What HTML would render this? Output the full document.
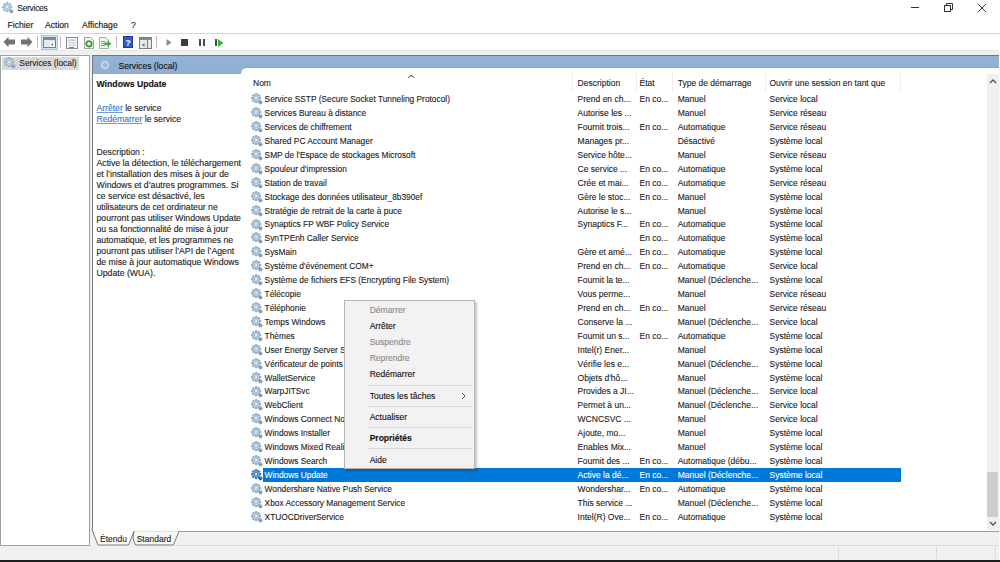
<!DOCTYPE html><html><head><meta charset="utf-8"><style>
*{box-sizing:border-box}
body{margin:0;width:1000px;height:562px;overflow:hidden;background:#f0f0f0;position:relative;font-family:'Liberation Sans',sans-serif;color:#000;-webkit-text-stroke:0.12px}
.a{position:absolute;white-space:nowrap}
.t{position:absolute;white-space:nowrap;font-size:8.5px;line-height:14px;color:#1a1a1a;-webkit-text-stroke:0.1px}
</style></head><body>
<svg width="0" height="0" style="position:absolute">
<defs>
<symbol id="gear" viewBox="0 0 14 14">
<path d="M12.69 10.39L13.51 10.33L13.51 11.67L12.69 11.61L12.37 12.16L12.84 12.84L11.67 13.51L11.32 12.77L10.68 12.77L10.33 13.51L9.16 12.84L9.63 12.16L9.31 11.61L8.49 11.67L8.49 10.33L9.31 10.39L9.63 9.84L9.16 9.16L10.33 8.49L10.68 9.23L11.32 9.23L11.67 8.49L12.84 9.16L12.37 9.84Z" fill="#8497ad"/>
<path d="M10.18 4.98L11.51 5.02L11.51 6.98L10.18 7.02L9.68 8.23L10.59 9.20L9.20 10.59L8.23 9.68L7.02 10.18L6.98 11.51L5.02 11.51L4.98 10.18L3.77 9.68L2.80 10.59L1.41 9.20L2.32 8.23L1.82 7.02L0.49 6.98L0.49 5.02L1.82 4.98L2.32 3.77L1.41 2.80L2.80 1.41L3.77 2.32L4.98 1.82L5.02 0.49L6.98 0.49L7.02 1.82L8.23 2.32L9.20 1.41L10.59 2.80L9.68 3.77Z" fill="#98afc6" stroke="#7b93ab" stroke-width="0.6"/>
<circle cx="6" cy="6" r="3.3" fill="#bcd8ef"/>
<circle cx="6" cy="6" r="2.0" fill="#7a9cbc"/>
<circle cx="6" cy="6" r="1.35" fill="#f6fbff"/>
</symbol>
<symbol id="gearsel" viewBox="0 0 14 14">
<path d="M12.69 10.39L13.51 10.33L13.51 11.67L12.69 11.61L12.37 12.16L12.84 12.84L11.67 13.51L11.32 12.77L10.68 12.77L10.33 13.51L9.16 12.84L9.63 12.16L9.31 11.61L8.49 11.67L8.49 10.33L9.31 10.39L9.63 9.84L9.16 9.16L10.33 8.49L10.68 9.23L11.32 9.23L11.67 8.49L12.84 9.16L12.37 9.84Z" fill="#2c5f96"/>
<path d="M10.18 4.98L11.51 5.02L11.51 6.98L10.18 7.02L9.68 8.23L10.59 9.20L9.20 10.59L8.23 9.68L7.02 10.18L6.98 11.51L5.02 11.51L4.98 10.18L3.77 9.68L2.80 10.59L1.41 9.20L2.32 8.23L1.82 7.02L0.49 6.98L0.49 5.02L1.82 4.98L2.32 3.77L1.41 2.80L2.80 1.41L3.77 2.32L4.98 1.82L5.02 0.49L6.98 0.49L7.02 1.82L8.23 2.32L9.20 1.41L10.59 2.80L9.68 3.77Z" fill="#3d7fc2" stroke="#2a68a8" stroke-width="0.7"/>
<circle cx="6" cy="6" r="3.3" fill="#7fb6e6"/>
<circle cx="6" cy="6" r="2.1" fill="#2a66a6"/>
<circle cx="6" cy="6" r="1.3" fill="#f4f9ff"/>
</symbol>
<symbol id="gearlt" viewBox="0 0 14 14">
<path d="M12.69 10.39L13.51 10.33L13.51 11.67L12.69 11.61L12.37 12.16L12.84 12.84L11.67 13.51L11.32 12.77L10.68 12.77L10.33 13.51L9.16 12.84L9.63 12.16L9.31 11.61L8.49 11.67L8.49 10.33L9.31 10.39L9.63 9.84L9.16 9.16L10.33 8.49L10.68 9.23L11.32 9.23L11.67 8.49L12.84 9.16L12.37 9.84Z" fill="#8fa3b8"/>
<path d="M10.18 4.98L11.51 5.02L11.51 6.98L10.18 7.02L9.68 8.23L10.59 9.20L9.20 10.59L8.23 9.68L7.02 10.18L6.98 11.51L5.02 11.51L4.98 10.18L3.77 9.68L2.80 10.59L1.41 9.20L2.32 8.23L1.82 7.02L0.49 6.98L0.49 5.02L1.82 4.98L2.32 3.77L1.41 2.80L2.80 1.41L3.77 2.32L4.98 1.82L5.02 0.49L6.98 0.49L7.02 1.82L8.23 2.32L9.20 1.41L10.59 2.80L9.68 3.77Z" fill="#a3b8cc" stroke="#8aa0b6" stroke-width="0.6"/>
<circle cx="6" cy="6" r="3.3" fill="#c2dcf0"/>
<circle cx="6" cy="6" r="2.0" fill="#8eb0cc"/>
<circle cx="6" cy="6" r="1.3" fill="#eef6ff"/>
</symbol>
</defs></svg>

<div class="a" style="left:0;top:0;width:1000px;height:50px;background:#fff"></div>
<div class="a" style="left:0;top:33px;width:1000px;height:1px;background:#d5d5d5"></div>
<div class="a" style="left:0;top:50px;width:1000px;height:1px;background:#e6e6e6"></div>
<svg class="a" style="left:2px;top:2px" width="12" height="12"><use href="#gearlt"/></svg>
<div class="a" style="left:17.3px;top:2.3px;font-size:8.6px;line-height:12px;color:#222;letter-spacing:-0.35px;-webkit-text-stroke:0.1px">Services</div>
<div class="a" style="left:911px;top:7px;width:8px;height:1px;background:#333"></div>
<svg class="a" style="left:943px;top:2px" width="11" height="11"><rect x="1.5" y="3.5" width="6" height="6" fill="none" stroke="#333" stroke-width="1"/><path d="M3.5 3.5V1.5H9.5V7.5H7.5" fill="none" stroke="#333" stroke-width="1"/></svg>
<svg class="a" style="left:977px;top:3px" width="10" height="10"><path d="M1 1L9 9M9 1L1 9" stroke="#333" stroke-width="1"/></svg>
<div class="a" style="left:7.5px;top:19px;font-size:8.6px;line-height:12px;color:#111">Fichier</div>
<div class="a" style="left:45px;top:19px;font-size:8.6px;line-height:12px;color:#111">Action</div>
<div class="a" style="left:82px;top:19px;font-size:8.6px;line-height:12px;color:#111">Affichage</div>
<div class="a" style="left:131px;top:19px;font-size:8.6px;line-height:12px;color:#111">?</div>
<div class="a" style="left:41px;top:34.5px;width:16.5px;height:15px;background:#cce4f7;border:1px solid #99c9ef"></div>

<svg class="a" style="left:3px;top:36px" width="13" height="12"><path d="M0.5 6L5.5 0.8V3.5H12V8.5H5.5V11.2Z" fill="#747474"/></svg>
<svg class="a" style="left:20px;top:36px" width="13" height="12"><path d="M12.5 6L7.5 0.8V3.5H1V8.5H7.5V11.2Z" fill="#747474"/></svg>
<div class="a" style="left:37px;top:36px;width:1px;height:12px;background:#bdbdbd"></div>
<svg class="a" style="left:43px;top:37px" width="13" height="11"><rect x="0.5" y="0.5" width="12" height="10" fill="#e8e8f0" stroke="#7a7a90"/><rect x="1" y="1" width="11" height="2" fill="#8888a0"/><rect x="7" y="5" width="4.5" height="5" fill="#fff"/><path d="M8 7.5L10 6V9Z" fill="#2ea02e"/></svg>
<div class="a" style="left:59.5px;top:36px;width:1px;height:12px;background:#bdbdbd"></div>
<svg class="a" style="left:65.5px;top:36.5px" width="12" height="12"><rect x="0.5" y="0.5" width="11" height="11" fill="#f6f8fa" stroke="#8c8c8c"/><rect x="2" y="2.5" width="8" height="1.3" fill="#b9c6d6"/><rect x="2" y="5" width="8" height="1.3" fill="#c6d2e0"/><rect x="2" y="7.5" width="8" height="1.3" fill="#c6d2e0"/><rect x="3" y="10" width="5" height="1" fill="#4b86c8"/></svg>
<svg class="a" style="left:84px;top:36.5px" width="10" height="12"><path d="M0.5 0.5H6.5L9.5 3.5V11.5H0.5Z" fill="#f7f7f7" stroke="#a0a0a0"/><circle cx="5" cy="6.8" r="2.7" fill="none" stroke="#2fa22f" stroke-width="1.8"/><path d="M5 5.5V8" stroke="#fff" stroke-width="1"/></svg>
<svg class="a" style="left:99px;top:36.5px" width="13" height="12"><path d="M0.5 0.5H7L9.5 3V11.5H0.5Z" fill="#f6f5ec" stroke="#a8a8a0"/><path d="M2 4.5H6M2 6.5H6M2 8.5H6" stroke="#7a7a60" stroke-width="0.8"/><path d="M5.5 5.5H8.5V3.5L12.5 6.8L8.5 10V8H5.5Z" fill="#3cb43c"/></svg>
<div class="a" style="left:115.5px;top:36px;width:1px;height:12px;background:#bdbdbd"></div>
<svg class="a" style="left:123px;top:36px" width="10" height="12"><rect x="0" y="0" width="10" height="12" fill="#1f3f9e"/><rect x="1" y="1" width="8" height="10" fill="#3457c0"/><text x="5" y="9.5" font-family="Liberation Sans" font-size="9" font-weight="bold" fill="#fff" text-anchor="middle">?</text></svg>
<svg class="a" style="left:138.5px;top:37px" width="13" height="12"><rect x="0.5" y="0.5" width="12" height="11" fill="#e8e8f0" stroke="#7a7a90"/><rect x="1" y="1" width="11" height="2" fill="#8888a0"/><path d="M8.5 3V11.5" stroke="#7a7a90"/><path d="M3 8L5.5 6V10Z" fill="#2ea02e"/></svg>
<div class="a" style="left:155.5px;top:36px;width:1px;height:12px;background:#bdbdbd"></div>
<svg class="a" style="left:165.5px;top:39px" width="6" height="7"><path d="M0.5 0L5.5 3.5L0.5 7Z" fill="#8a8a8a"/></svg>
<div class="a" style="left:181px;top:39px;width:7px;height:7px;background:#3c3c3c"></div>
<div class="a" style="left:198.5px;top:39px;width:2px;height:7px;background:#4a4a4a"></div>
<div class="a" style="left:202.5px;top:39px;width:2px;height:7px;background:#4a4a4a"></div>
<div class="a" style="left:214.5px;top:39px;width:2px;height:7px;background:#4a4a4a"></div>
<svg class="a" style="left:217.5px;top:38.5px" width="6" height="8"><path d="M0 0L5.5 4L0 8Z" fill="#2eb82e"/></svg>

<div class="a" style="left:0;top:55px;width:90px;height:490.5px;background:#fff;border:1px solid #a0a0a0"></div>
<div class="a" style="left:2px;top:57px;width:77px;height:12.5px;background:#d9d9d9"></div>
<svg class="a" style="left:3.5px;top:57.3px" width="12" height="12"><use href="#gearlt"/></svg>
<div class="a" style="left:19.3px;top:56.7px;font-size:8.4px;line-height:12px;color:#222;-webkit-text-stroke:0.1px">Services (local)</div>
<div class="a" style="left:92px;top:55px;width:907px;height:475.5px;background:#fff;border-left:1px solid #7a7a7a;border-top:1px solid #6f7787"></div>
<div class="a" style="left:175px;top:544.5px;width:824px;height:1px;background:#dadada"></div>
<div class="a" style="left:93px;top:56px;width:906px;height:17.6px;background:linear-gradient(#93b4d6,#8fb1d4 50%,#96acd5)"></div>
<svg class="a" style="left:100px;top:59.7px" width="10" height="10"><circle cx="5" cy="5" r="3.3" fill="none" stroke="#c3d7ea" stroke-width="2"/><circle cx="5" cy="5" r="1.3" fill="#9fbddb"/></svg>
<div class="a" style="left:118.5px;top:59.6px;font-size:8.6px;line-height:12px;color:#111">Services (local)</div>
<div class="a" style="left:93px;top:73.6px;width:148px;height:458px;background:#fff"></div>
<div class="a" style="left:96.5px;top:78.8px;font-size:8.7px;line-height:11px;font-weight:bold;color:#111">Windows Update</div>
<div class="a" style="left:96.5px;top:102.5px;font-size:8.6px;line-height:11px;color:#222"><span style="color:#3478c6;text-decoration:underline;text-decoration-color:#6a9fd8">Arrêter</span> le service</div>
<div class="a" style="left:96.5px;top:113.5px;font-size:8.6px;line-height:11px;color:#222"><span style="color:#3478c6;text-decoration:underline;text-decoration-color:#6a9fd8">Redémarrer</span> le service</div>
<div class="a" style="left:96.5px;top:146.5px;font-size:8.7px;line-height:11px;color:#222">Description :<br>Active la détection, le téléchargement<br>et l’installation des mises à jour de<br>Windows et d’autres programmes. Si<br>ce service est désactivé, les<br>utilisateurs de cet ordinateur ne<br>pourront pas utiliser Windows Update<br>ou sa fonctionnalité de mise à jour<br>automatique, et les programmes ne<br>pourront pas utiliser l’API de l’Agent<br>de mise à jour automatique Windows<br>Update (WUA).</div>
<div class="a" style="left:241px;top:67px;width:758px;height:464.5px;background:#fff;border-top-left-radius:6px;border-top:1px solid #88a8b8"></div>
<div class="a" style="left:572px;top:72.5px;width:1px;height:19px;background:#ededed"></div>
<div class="a" style="left:635.5px;top:72.5px;width:1px;height:19px;background:#ededed"></div>
<div class="a" style="left:672px;top:72.5px;width:1px;height:19px;background:#ededed"></div>
<div class="a" style="left:764.6px;top:72.5px;width:1px;height:19px;background:#ededed"></div>
<div class="a" style="left:900px;top:72.5px;width:1px;height:19px;background:#ededed"></div>
<div class="t" style="left:253px;top:75.7px">Nom</div>
<div class="t" style="left:577.6px;top:75.7px">Description</div>
<div class="t" style="left:639.6px;top:75.7px">État</div>
<div class="t" style="left:677.7px;top:75.7px">Type de démarrage</div>
<div class="t" style="left:769.5px;top:75.7px">Ouvrir une session en tant que</div>
<svg class="a" style="left:407px;top:73px" width="8" height="6"><path d="M1.2 4.6L4.2 2.2L7.2 4.6" fill="none" stroke="#6a6a6a" stroke-width="1.1"/></svg>
<svg class="a" style="left:250.5px;top:93.30px" width="12" height="12"><use href="#gear"/></svg>
<div class="t" style="left:264.6px;top:92.20px;color:#1a1a1a;font-size:8.35px">Service SSTP (Secure Socket Tunneling Protocol)</div>
<div class="t" style="left:577.6px;top:92.20px;color:#1a1a1a">Prend en ch...</div>
<div class="t" style="left:639.6px;top:92.20px;color:#1a1a1a">En co...</div>
<div class="t" style="left:677.7px;top:92.20px;color:#1a1a1a">Manuel</div>
<div class="t" style="left:769.5px;top:92.20px;color:#1a1a1a">Service local</div>
<svg class="a" style="left:250.5px;top:107.22px" width="12" height="12"><use href="#gear"/></svg>
<div class="t" style="left:264.6px;top:106.11px;color:#1a1a1a;font-size:8.35px">Services Bureau à distance</div>
<div class="t" style="left:577.6px;top:106.11px;color:#1a1a1a">Autorise les ...</div>
<div class="t" style="left:677.7px;top:106.11px;color:#1a1a1a">Manuel</div>
<div class="t" style="left:769.5px;top:106.11px;color:#1a1a1a">Service réseau</div>
<svg class="a" style="left:250.5px;top:121.13px" width="12" height="12"><use href="#gear"/></svg>
<div class="t" style="left:264.6px;top:120.03px;color:#1a1a1a;font-size:8.35px">Services de chiffrement</div>
<div class="t" style="left:577.6px;top:120.03px;color:#1a1a1a">Fournit trois...</div>
<div class="t" style="left:639.6px;top:120.03px;color:#1a1a1a">En co...</div>
<div class="t" style="left:677.7px;top:120.03px;color:#1a1a1a">Automatique</div>
<div class="t" style="left:769.5px;top:120.03px;color:#1a1a1a">Service réseau</div>
<svg class="a" style="left:250.5px;top:135.05px" width="12" height="12"><use href="#gear"/></svg>
<div class="t" style="left:264.6px;top:133.95px;color:#1a1a1a;font-size:8.35px">Shared PC Account Manager</div>
<div class="t" style="left:577.6px;top:133.95px;color:#1a1a1a">Manages pr...</div>
<div class="t" style="left:677.7px;top:133.95px;color:#1a1a1a">Désactivé</div>
<div class="t" style="left:769.5px;top:133.95px;color:#1a1a1a">Système local</div>
<svg class="a" style="left:250.5px;top:148.96px" width="12" height="12"><use href="#gear"/></svg>
<div class="t" style="left:264.6px;top:147.86px;color:#1a1a1a;font-size:8.35px">SMP de l'Espace de stockages Microsoft</div>
<div class="t" style="left:577.6px;top:147.86px;color:#1a1a1a">Service hôte...</div>
<div class="t" style="left:677.7px;top:147.86px;color:#1a1a1a">Manuel</div>
<div class="t" style="left:769.5px;top:147.86px;color:#1a1a1a">Service réseau</div>
<svg class="a" style="left:250.5px;top:162.88px" width="12" height="12"><use href="#gear"/></svg>
<div class="t" style="left:264.6px;top:161.78px;color:#1a1a1a;font-size:8.35px">Spouleur d'impression</div>
<div class="t" style="left:577.6px;top:161.78px;color:#1a1a1a">Ce service ...</div>
<div class="t" style="left:639.6px;top:161.78px;color:#1a1a1a">En co...</div>
<div class="t" style="left:677.7px;top:161.78px;color:#1a1a1a">Automatique</div>
<div class="t" style="left:769.5px;top:161.78px;color:#1a1a1a">Système local</div>
<svg class="a" style="left:250.5px;top:176.79px" width="12" height="12"><use href="#gear"/></svg>
<div class="t" style="left:264.6px;top:175.69px;color:#1a1a1a;font-size:8.35px">Station de travail</div>
<div class="t" style="left:577.6px;top:175.69px;color:#1a1a1a">Crée et mai...</div>
<div class="t" style="left:639.6px;top:175.69px;color:#1a1a1a">En co...</div>
<div class="t" style="left:677.7px;top:175.69px;color:#1a1a1a">Automatique</div>
<div class="t" style="left:769.5px;top:175.69px;color:#1a1a1a">Service réseau</div>
<svg class="a" style="left:250.5px;top:190.71px" width="12" height="12"><use href="#gear"/></svg>
<div class="t" style="left:264.6px;top:189.61px;color:#1a1a1a;font-size:8.35px">Stockage des données utilisateur_8b390ef</div>
<div class="t" style="left:577.6px;top:189.61px;color:#1a1a1a">Gère le stoc...</div>
<div class="t" style="left:639.6px;top:189.61px;color:#1a1a1a">En co...</div>
<div class="t" style="left:677.7px;top:189.61px;color:#1a1a1a">Manuel</div>
<div class="t" style="left:769.5px;top:189.61px;color:#1a1a1a">Système local</div>
<svg class="a" style="left:250.5px;top:204.62px" width="12" height="12"><use href="#gear"/></svg>
<div class="t" style="left:264.6px;top:203.52px;color:#1a1a1a;font-size:8.35px">Stratégie de retrait de la carte à puce</div>
<div class="t" style="left:577.6px;top:203.52px;color:#1a1a1a">Autorise le s...</div>
<div class="t" style="left:677.7px;top:203.52px;color:#1a1a1a">Manuel</div>
<div class="t" style="left:769.5px;top:203.52px;color:#1a1a1a">Système local</div>
<svg class="a" style="left:250.5px;top:218.53px" width="12" height="12"><use href="#gear"/></svg>
<div class="t" style="left:264.6px;top:217.44px;color:#1a1a1a;font-size:8.35px">Synaptics FP WBF Policy Service</div>
<div class="t" style="left:577.6px;top:217.44px;color:#1a1a1a">Synaptics F...</div>
<div class="t" style="left:639.6px;top:217.44px;color:#1a1a1a">En co...</div>
<div class="t" style="left:677.7px;top:217.44px;color:#1a1a1a">Automatique</div>
<div class="t" style="left:769.5px;top:217.44px;color:#1a1a1a">Système local</div>
<svg class="a" style="left:250.5px;top:232.45px" width="12" height="12"><use href="#gear"/></svg>
<div class="t" style="left:264.6px;top:231.35px;color:#1a1a1a;font-size:8.35px">SynTPEnh Caller Service</div>
<div class="t" style="left:639.6px;top:231.35px;color:#1a1a1a">En co...</div>
<div class="t" style="left:677.7px;top:231.35px;color:#1a1a1a">Automatique</div>
<div class="t" style="left:769.5px;top:231.35px;color:#1a1a1a">Système local</div>
<svg class="a" style="left:250.5px;top:246.37px" width="12" height="12"><use href="#gear"/></svg>
<div class="t" style="left:264.6px;top:245.27px;color:#1a1a1a;font-size:8.35px">SysMain</div>
<div class="t" style="left:577.6px;top:245.27px;color:#1a1a1a">Gère et amé...</div>
<div class="t" style="left:639.6px;top:245.27px;color:#1a1a1a">En co...</div>
<div class="t" style="left:677.7px;top:245.27px;color:#1a1a1a">Automatique</div>
<div class="t" style="left:769.5px;top:245.27px;color:#1a1a1a">Système local</div>
<svg class="a" style="left:250.5px;top:260.28px" width="12" height="12"><use href="#gear"/></svg>
<div class="t" style="left:264.6px;top:259.18px;color:#1a1a1a;font-size:8.35px">Système d'événement COM+</div>
<div class="t" style="left:577.6px;top:259.18px;color:#1a1a1a">Prend en ch...</div>
<div class="t" style="left:639.6px;top:259.18px;color:#1a1a1a">En co...</div>
<div class="t" style="left:677.7px;top:259.18px;color:#1a1a1a">Automatique</div>
<div class="t" style="left:769.5px;top:259.18px;color:#1a1a1a">Service local</div>
<svg class="a" style="left:250.5px;top:274.19px" width="12" height="12"><use href="#gear"/></svg>
<div class="t" style="left:264.6px;top:273.09px;color:#1a1a1a;font-size:8.35px">Système de fichiers EFS (Encrypting File System)</div>
<div class="t" style="left:577.6px;top:273.09px;color:#1a1a1a">Fournit la te...</div>
<div class="t" style="left:677.7px;top:273.09px;color:#1a1a1a">Manuel (Déclenche...</div>
<div class="t" style="left:769.5px;top:273.09px;color:#1a1a1a">Système local</div>
<svg class="a" style="left:250.5px;top:288.11px" width="12" height="12"><use href="#gear"/></svg>
<div class="t" style="left:264.6px;top:287.01px;color:#1a1a1a;font-size:8.35px">Télécopie</div>
<div class="t" style="left:577.6px;top:287.01px;color:#1a1a1a">Vous perme...</div>
<div class="t" style="left:677.7px;top:287.01px;color:#1a1a1a">Manuel</div>
<div class="t" style="left:769.5px;top:287.01px;color:#1a1a1a">Service réseau</div>
<svg class="a" style="left:250.5px;top:302.02px" width="12" height="12"><use href="#gear"/></svg>
<div class="t" style="left:264.6px;top:300.93px;color:#1a1a1a;font-size:8.35px">Téléphonie</div>
<div class="t" style="left:577.6px;top:300.93px;color:#1a1a1a">Prend en ch...</div>
<div class="t" style="left:639.6px;top:300.93px;color:#1a1a1a">En co...</div>
<div class="t" style="left:677.7px;top:300.93px;color:#1a1a1a">Manuel</div>
<div class="t" style="left:769.5px;top:300.93px;color:#1a1a1a">Service réseau</div>
<svg class="a" style="left:250.5px;top:315.94px" width="12" height="12"><use href="#gear"/></svg>
<div class="t" style="left:264.6px;top:314.84px;color:#1a1a1a;font-size:8.35px">Temps Windows</div>
<div class="t" style="left:577.6px;top:314.84px;color:#1a1a1a">Conserve la ...</div>
<div class="t" style="left:677.7px;top:314.84px;color:#1a1a1a">Manuel (Déclenche...</div>
<div class="t" style="left:769.5px;top:314.84px;color:#1a1a1a">Service local</div>
<svg class="a" style="left:250.5px;top:329.85px" width="12" height="12"><use href="#gear"/></svg>
<div class="t" style="left:264.6px;top:328.75px;color:#1a1a1a;font-size:8.35px">Thèmes</div>
<div class="t" style="left:577.6px;top:328.75px;color:#1a1a1a">Fournit un s...</div>
<div class="t" style="left:639.6px;top:328.75px;color:#1a1a1a">En co...</div>
<div class="t" style="left:677.7px;top:328.75px;color:#1a1a1a">Automatique</div>
<div class="t" style="left:769.5px;top:328.75px;color:#1a1a1a">Système local</div>
<svg class="a" style="left:250.5px;top:343.77px" width="12" height="12"><use href="#gear"/></svg>
<div class="t" style="left:264.6px;top:342.67px;color:#1a1a1a;font-size:8.35px">User Energy Server Service</div>
<div class="t" style="left:577.6px;top:342.67px;color:#1a1a1a">Intel(r) Ener...</div>
<div class="t" style="left:677.7px;top:342.67px;color:#1a1a1a">Manuel</div>
<div class="t" style="left:769.5px;top:342.67px;color:#1a1a1a">Système local</div>
<svg class="a" style="left:250.5px;top:357.68px" width="12" height="12"><use href="#gear"/></svg>
<div class="t" style="left:264.6px;top:356.58px;color:#1a1a1a;font-size:8.35px">Vérificateur de points</div>
<div class="t" style="left:577.6px;top:356.58px;color:#1a1a1a">Vérifie les e...</div>
<div class="t" style="left:677.7px;top:356.58px;color:#1a1a1a">Manuel (Déclenche...</div>
<div class="t" style="left:769.5px;top:356.58px;color:#1a1a1a">Système local</div>
<svg class="a" style="left:250.5px;top:371.60px" width="12" height="12"><use href="#gear"/></svg>
<div class="t" style="left:264.6px;top:370.50px;color:#1a1a1a;font-size:8.35px">WalletService</div>
<div class="t" style="left:577.6px;top:370.50px;color:#1a1a1a">Objets d'hô...</div>
<div class="t" style="left:677.7px;top:370.50px;color:#1a1a1a">Manuel</div>
<div class="t" style="left:769.5px;top:370.50px;color:#1a1a1a">Système local</div>
<svg class="a" style="left:250.5px;top:385.51px" width="12" height="12"><use href="#gear"/></svg>
<div class="t" style="left:264.6px;top:384.42px;color:#1a1a1a;font-size:8.35px">WarpJITSvc</div>
<div class="t" style="left:577.6px;top:384.42px;color:#1a1a1a">Provides a JI...</div>
<div class="t" style="left:677.7px;top:384.42px;color:#1a1a1a">Manuel (Déclenche...</div>
<div class="t" style="left:769.5px;top:384.42px;color:#1a1a1a">Service local</div>
<svg class="a" style="left:250.5px;top:399.43px" width="12" height="12"><use href="#gear"/></svg>
<div class="t" style="left:264.6px;top:398.33px;color:#1a1a1a;font-size:8.35px">WebClient</div>
<div class="t" style="left:577.6px;top:398.33px;color:#1a1a1a">Permet à un...</div>
<div class="t" style="left:677.7px;top:398.33px;color:#1a1a1a">Manuel (Déclenche...</div>
<div class="t" style="left:769.5px;top:398.33px;color:#1a1a1a">Service local</div>
<svg class="a" style="left:250.5px;top:413.34px" width="12" height="12"><use href="#gear"/></svg>
<div class="t" style="left:264.6px;top:412.24px;color:#1a1a1a;font-size:8.35px">Windows Connect Now</div>
<div class="t" style="left:577.6px;top:412.24px;color:#1a1a1a">WCNCSVC ...</div>
<div class="t" style="left:677.7px;top:412.24px;color:#1a1a1a">Manuel</div>
<div class="t" style="left:769.5px;top:412.24px;color:#1a1a1a">Service local</div>
<svg class="a" style="left:250.5px;top:427.26px" width="12" height="12"><use href="#gear"/></svg>
<div class="t" style="left:264.6px;top:426.16px;color:#1a1a1a;font-size:8.35px">Windows Installer</div>
<div class="t" style="left:577.6px;top:426.16px;color:#1a1a1a">Ajoute, mo...</div>
<div class="t" style="left:677.7px;top:426.16px;color:#1a1a1a">Manuel</div>
<div class="t" style="left:769.5px;top:426.16px;color:#1a1a1a">Système local</div>
<svg class="a" style="left:250.5px;top:441.17px" width="12" height="12"><use href="#gear"/></svg>
<div class="t" style="left:264.6px;top:440.07px;color:#1a1a1a;font-size:8.35px">Windows Mixed Reality</div>
<div class="t" style="left:577.6px;top:440.07px;color:#1a1a1a">Enables Mix...</div>
<div class="t" style="left:677.7px;top:440.07px;color:#1a1a1a">Manuel</div>
<div class="t" style="left:769.5px;top:440.07px;color:#1a1a1a">Système local</div>
<svg class="a" style="left:250.5px;top:455.09px" width="12" height="12"><use href="#gear"/></svg>
<div class="t" style="left:264.6px;top:453.99px;color:#1a1a1a;font-size:8.35px">Windows Search</div>
<div class="t" style="left:577.6px;top:453.99px;color:#1a1a1a">Fournit des ...</div>
<div class="t" style="left:639.6px;top:453.99px;color:#1a1a1a">En co...</div>
<div class="t" style="left:677.7px;top:453.99px;color:#1a1a1a">Automatique (débu...</div>
<div class="t" style="left:769.5px;top:453.99px;color:#1a1a1a">Système local</div>
<div class="a" style="left:263px;top:467.61px;width:637.5px;height:13.915px;background:#0078d7"></div>
<svg class="a" style="left:250.5px;top:469.00px" width="12" height="12"><use href="#gearsel"/></svg>
<div class="t" style="left:264.6px;top:467.91px;color:#fff;font-size:8.35px">Windows Update</div>
<div class="t" style="left:577.6px;top:467.91px;color:#fff">Active la dé...</div>
<div class="t" style="left:639.6px;top:467.91px;color:#fff">En co...</div>
<div class="t" style="left:677.7px;top:467.91px;color:#fff">Manuel (Déclenche...</div>
<div class="t" style="left:769.5px;top:467.91px;color:#fff">Système local</div>
<svg class="a" style="left:250.5px;top:482.92px" width="12" height="12"><use href="#gear"/></svg>
<div class="t" style="left:264.6px;top:481.82px;color:#1a1a1a;font-size:8.35px">Wondershare Native Push Service</div>
<div class="t" style="left:577.6px;top:481.82px;color:#1a1a1a">Wondershar...</div>
<div class="t" style="left:639.6px;top:481.82px;color:#1a1a1a">En co...</div>
<div class="t" style="left:677.7px;top:481.82px;color:#1a1a1a">Automatique</div>
<div class="t" style="left:769.5px;top:481.82px;color:#1a1a1a">Système local</div>
<svg class="a" style="left:250.5px;top:496.83px" width="12" height="12"><use href="#gear"/></svg>
<div class="t" style="left:264.6px;top:495.73px;color:#1a1a1a;font-size:8.35px">Xbox Accessory Management Service</div>
<div class="t" style="left:577.6px;top:495.73px;color:#1a1a1a">This service ...</div>
<div class="t" style="left:677.7px;top:495.73px;color:#1a1a1a">Manuel (Déclenche...</div>
<div class="t" style="left:769.5px;top:495.73px;color:#1a1a1a">Système local</div>
<svg class="a" style="left:250.5px;top:510.75px" width="12" height="12"><use href="#gear"/></svg>
<div class="t" style="left:264.6px;top:509.65px;color:#1a1a1a;font-size:8.35px">XTUOCDriverService</div>
<div class="t" style="left:577.6px;top:509.65px;color:#1a1a1a">Intel(R) Ove...</div>
<div class="t" style="left:639.6px;top:509.65px;color:#1a1a1a">En co...</div>
<div class="t" style="left:677.7px;top:509.65px;color:#1a1a1a">Automatique</div>
<div class="t" style="left:769.5px;top:509.65px;color:#1a1a1a">Système local</div>
<div class="a" style="left:987px;top:74px;width:12px;height:455.5px;background:#f0f0f0"></div>
<svg class="a" style="left:989px;top:78px" width="8" height="6"><path d="M1 5L4 2L7 5" fill="none" stroke="#505050" stroke-width="1.3"/></svg>
<svg class="a" style="left:989px;top:521px" width="8" height="6"><path d="M1 1L4 4L7 1" fill="none" stroke="#505050" stroke-width="1.3"/></svg>
<div class="a" style="left:987px;top:471.5px;width:10.6px;height:45.7px;background:#cdcdcd"></div>
<div class="a" style="left:93px;top:531px;width:906px;height:14px;background:#f0f0f0"></div>
<div class="a" style="left:133px;top:531px;width:866px;height:1px;background:#9a9a9a"></div>
<svg class="a" style="left:90px;top:528px" width="100" height="18"><path d="M2.2 0V2L8 17.2H38.5L44 3.5L42 10L45.5 17.2H83.3L89 3.5H44Z" fill="#fff" stroke="none"/><path d="M44 3.5L42 10L45.5 17.2H83.3L89 3.5Z" fill="#f8f8f8"/><path d="M2.2 0V2L8 17H38.5L44 3.5M44 3.5Q41.6 9.5 45.5 17H83.3L89 3.5" fill="none" stroke="#6a6a6a" stroke-width="0.9"/></svg>
<div class="t" style="left:100px;top:531.5px;color:#222">Étendu</div>
<div class="t" style="left:136.7px;top:531.5px;color:#222">Standard</div>
<div class="a" style="left:0;top:545.5px;width:1000px;height:14px;background:#f0f0f0"></div>
<div class="a" style="left:838px;top:547px;width:1px;height:12px;background:#dadada"></div>
<div class="a" style="left:935.5px;top:547px;width:1px;height:12px;background:#dadada"></div>
<div class="a" style="left:995px;top:547px;width:1px;height:12px;background:#dadada"></div>
<div class="a" style="left:0;top:559.6px;width:1000px;height:3px;background:#1e1e1e"></div>
<div class="a" style="left:999px;top:50px;width:1px;height:509.6px;background:#fafafa"></div>
<div class="a" style="left:344px;top:300px;width:130.5px;height:169px;background:#f2f2f2;border:1px solid #b4b4b4;box-shadow:1.5px 1.5px 2px rgba(0,0,0,0.22)"></div>
<div class="a" style="left:369.7px;top:303.5px;font-size:8.5px;line-height:12px;color:#8a8a8a;font-weight:normal">Démarrer</div>
<div class="a" style="left:369.7px;top:319.5px;font-size:8.5px;line-height:12px;color:#111;font-weight:normal">Arrêter</div>
<div class="a" style="left:369.7px;top:335.5px;font-size:8.5px;line-height:12px;color:#8a8a8a;font-weight:normal">Suspendre</div>
<div class="a" style="left:369.7px;top:351.5px;font-size:8.5px;line-height:12px;color:#8a8a8a;font-weight:normal">Reprendre</div>
<div class="a" style="left:369.7px;top:367.5px;font-size:8.5px;line-height:12px;color:#111;font-weight:normal">Redémarrer</div>
<div class="a" style="left:369.7px;top:389.7px;font-size:8.5px;line-height:12px;color:#111;font-weight:normal">Toutes les tâches</div>
<div class="a" style="left:369.7px;top:410.6px;font-size:8.5px;line-height:12px;color:#111;font-weight:normal">Actualiser</div>
<div class="a" style="left:369.7px;top:432.2px;font-size:8.5px;line-height:12px;color:#111;font-weight:bold">Propriétés</div>
<div class="a" style="left:369.7px;top:453.8px;font-size:8.5px;line-height:12px;color:#111;font-weight:normal">Aide</div>
<div class="a" style="left:367.5px;top:384.8px;width:104px;height:1px;background:#d8d8d8"></div>
<div class="a" style="left:367.5px;top:405.6px;width:104px;height:1px;background:#d8d8d8"></div>
<div class="a" style="left:367.5px;top:427.2px;width:104px;height:1px;background:#d8d8d8"></div>
<div class="a" style="left:367.5px;top:448px;width:104px;height:1px;background:#d8d8d8"></div>
<svg class="a" style="left:461px;top:392px" width="5" height="8"><path d="M1 1L4 4L1 7" fill="none" stroke="#444" stroke-width="0.9"/></svg>
</body></html>
